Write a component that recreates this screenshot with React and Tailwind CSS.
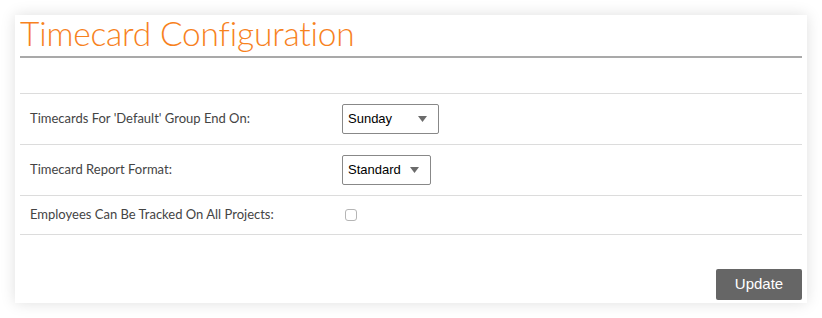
export default function App() {
  const Caret = () => (
    <svg width="9" height="6" viewBox="0 0 9 6" className="shrink-0">
      <path d="M0 0 H9 L4.5 6 Z" fill="#6b6b6b" />
    </svg>
  );

  return (
    <div className="w-[822px] h-[318px] bg-white pt-[15px] pl-[15px]" style={{ fontFamily: "Lato, 'Open Sans', sans-serif" }}>
      <div className="w-[792px] h-[288px] bg-white shadow-[0_0_14px_rgba(0,0,0,0.13)] px-[5px] flex flex-col">
        <div className="h-[43px] border-b-2 border-[#a9a9a9] flex items-end pb-[3px]">
          <h1 className="text-[33.5px] leading-[40px] font-light text-[#f7821e] tracking-[-0.2px]">Timecard Configuration</h1>
        </div>
        <div className="h-[35px]" />
        <div className="border-t border-[#dcdcdc] h-[51px] flex items-center">
          <div className="w-[322px] pl-[10px] text-[13px] text-[#444]">Timecards For 'Default' Group End On:</div>
          <div className="w-[97px] h-[30px] border border-[#888] rounded-[2px] flex items-center justify-between pl-[5px] pr-[11px] text-[13px] text-black" style={{ fontFamily: "'Liberation Sans', Arial, sans-serif" }}>
            <span>Sunday</span>
            <Caret />
          </div>
        </div>
        <div className="border-t border-[#dcdcdc] h-[51px] flex items-center">
          <div className="w-[322px] pl-[10px] text-[13px] text-[#444]">Timecard Report Format:</div>
          <div className="w-[89px] h-[30px] border border-[#888] rounded-[2px] flex items-center justify-between pl-[5px] pr-[11px] text-[13px] text-black" style={{ fontFamily: "'Liberation Sans', Arial, sans-serif" }}>
            <span>Standard</span>
            <Caret />
          </div>
        </div>
        <div className="border-t border-b border-[#dcdcdc] h-[40px] flex items-center">
          <div className="w-[325px] pl-[10px] text-[13px] text-[#444]">Employees Can Be Tracked On All Projects:</div>
          <div className="w-[12px] h-[12px] border border-[#b5b5b5] rounded-[3px] bg-white" />
        </div>
        <div className="flex-1 flex justify-end items-end pb-[3px]">
          <button className="w-[86px] h-[31px] bg-[#666] text-white text-[15px] rounded-[2px]" style={{ fontFamily: "'Liberation Sans', Arial, sans-serif" }}>Update</button>
        </div>
      </div>
    </div>
  );
}
